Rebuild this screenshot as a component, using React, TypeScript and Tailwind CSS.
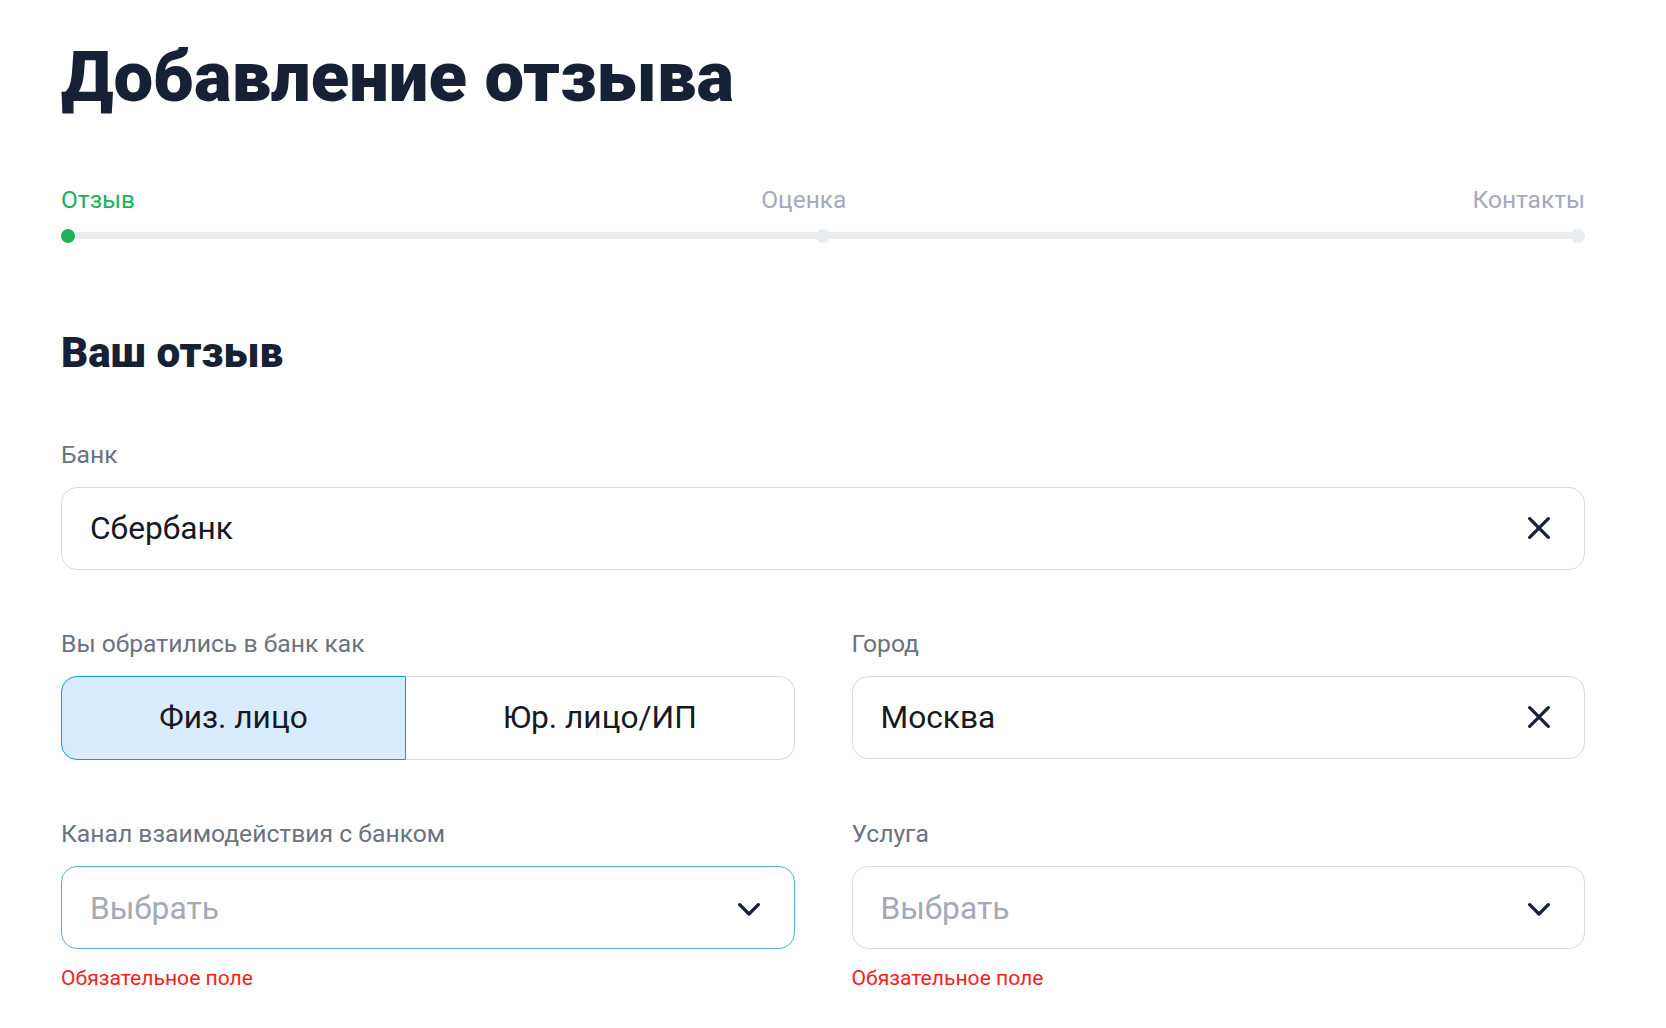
import { ReactNode } from "react";

function CloseIcon() {
  return (
    <svg className="mb-[2px]" width="22" height="22" viewBox="0 0 22 22" fill="none" stroke="#1a2238" strokeWidth="3.3" strokeLinecap="round">
      <path d="M1.7 1.7 20.3 20.3M20.3 1.7 1.7 20.3" />
    </svg>
  );
}

function ChevronIcon() {
  return (
    <svg className="mt-[3px]" width="22" height="13" viewBox="0 0 22 13" fill="none" stroke="#1a2238" strokeWidth="3.3" strokeLinecap="round" strokeLinejoin="round">
      <path d="M1.7 1.7 11 11 20.3 1.7" />
    </svg>
  );
}

function Field({ label, error, children }: { label: string; error?: boolean; children: ReactNode }) {
  return (
    <div className="flex flex-col">
      <div className="h-[26px] text-[24.7px] leading-[26px] text-[#6b7280]">{label}</div>
      <div className="mt-[19px]">{children}</div>
      {error && <div className="mt-[17px] h-[24px] text-[21.1px] leading-[24px] text-[#f5221b]">Обязательное поле</div>}
    </div>
  );
}

function Input({ value, placeholder, focused, select }: { value?: string; placeholder?: string; focused?: boolean; select?: boolean }) {
  return (
    <div
      className={`flex h-[83px] items-center justify-between rounded-[16px] border pl-[28px] pr-[34px] text-[31.7px] ${
        focused ? "border-[#5aaee0]" : "border-[#d9dae2]"
      }`}
    >
      <span className={value ? "text-[#16191f]" : "pt-[2px] text-[#a5a8b6]"}>{value ?? placeholder}</span>
      {select ? <ChevronIcon /> : <CloseIcon />}
    </div>
  );
}

export default function App() {
  const steps = ["Отзыв", "Оценка", "Контакты"];

  return (
    <div className="min-h-[1028px] bg-white font-['Roboto',sans-serif]">
      <div className="w-[1585px] pl-[61px]">
        <h1 className="pt-[32px] text-[70.6px] font-black leading-[90px] text-[#172136]">Добавление отзыва</h1>

        {/* Steps */}
        <div className="mt-[65px] flex justify-between text-[24.5px] leading-[26px] text-[#a5a9b8]">
          {steps.map((step, i) => (
            <span key={step} className={i === 0 ? "text-[#1ab05c]" : ""}>
              {step}
            </span>
          ))}
        </div>
        <div className="mt-[19px] flex h-[7px] items-center justify-between rounded-full bg-[#eaedf0]">
          <div className="h-[14px] w-[14px] rounded-full bg-[#1ab05c]" />
          <div className="h-[14px] w-[14px] rounded-full bg-[#eaedf0]" />
          <div className="h-[14px] w-[14px] rounded-full bg-[#eaedf0]" />
        </div>

        <h2 className="mt-[89px] text-[42.2px] font-black leading-[50px] text-[#172136]">Ваш отзыв</h2>

        <div className="mt-[64px]">
          <Field label="Банк">
            <Input value="Сбербанк" />
          </Field>
        </div>

        <div className="mt-[61px] grid grid-cols-2 gap-x-[57px] gap-y-[61px]">
          <Field label="Вы обратились в банк как">
            <div className="flex h-[84px] text-[31.7px] text-[#16191f]">
              <div className="flex w-[345px] items-center justify-center rounded-l-[16px] border border-[#0d9be6] bg-[#d9ecfe]">
                Физ. лицо
              </div>
              <div className="flex flex-1 items-center justify-center rounded-r-[16px] border border-l-0 border-[#d9dae2]">
                Юр. лицо/ИП
              </div>
            </div>
          </Field>
          <Field label="Город">
            <Input value="Москва" />
          </Field>
          <Field label="Канал взаимодействия с банком" error>
            <Input placeholder="Выбрать" focused select />
          </Field>
          <Field label="Услуга" error>
            <Input placeholder="Выбрать" select />
          </Field>
        </div>
      </div>
    </div>
  );
}
